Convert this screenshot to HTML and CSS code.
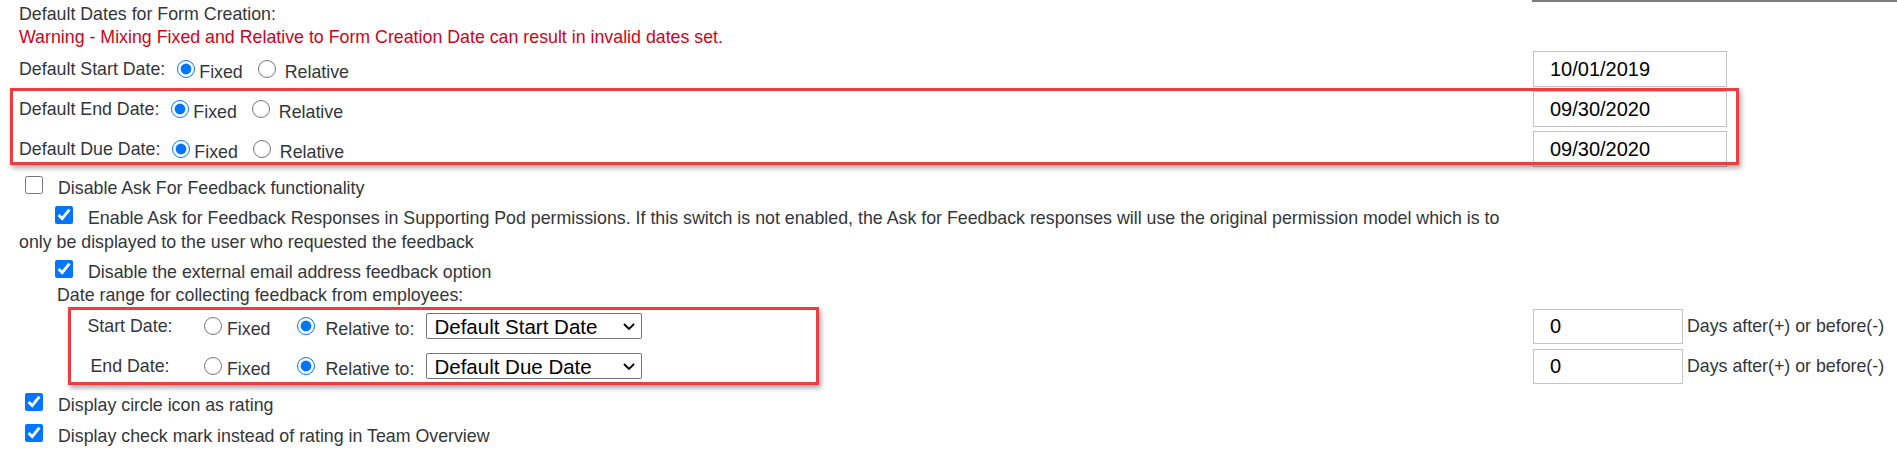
FILE: index.html
```
<!DOCTYPE html>
<html>
<head>
    <title>Form Template Settings</title>
    <link rel="stylesheet" href="styles.css">
</head>
<body>
    <div class="page">
        <div class="prev-field"></div>
        <div class="heading">Default Dates for Form Creation:</div>
        <div class="warning">Warning - Mixing Fixed and Relative to Form Creation Date can result in invalid dates set.</div>

        <div class="date-row">
            <div class="row-left">
                <span class="lbl">Default Start Date:</span>
                <input type="radio" name="startType" class="radio radio-fixed" checked>
                <span class="opt-text">Fixed</span>
                <input type="radio" name="startType" class="radio radio-rel">
                <span class="opt-text rel">Relative</span>
            </div>
            <div class="row-right"><input type="text" class="date-input" value="10/01/2019"></div>
        </div>

        <!-- end + due dates are marked in the screenshot -->
        <div class="highlight highlight-dates">
            <div class="date-row">
                <div class="row-left">
                    <span class="lbl">Default End Date:</span>
                    <input type="radio" name="endType" class="radio radio-fixed" checked>
                    <span class="opt-text">Fixed</span>
                    <input type="radio" name="endType" class="radio radio-rel">
                    <span class="opt-text rel">Relative</span>
                </div>
                <div class="row-right"><input type="text" class="date-input" value="09/30/2020"></div>
            </div>
            <div class="date-row">
                <div class="row-left">
                    <span class="lbl">Default Due Date:</span>
                    <input type="radio" name="dueType" class="radio radio-fixed" checked>
                    <span class="opt-text">Fixed</span>
                    <input type="radio" name="dueType" class="radio radio-rel">
                    <span class="opt-text rel">Relative</span>
                </div>
                <div class="row-right"><input type="text" class="date-input" value="09/30/2020"></div>
            </div>
        </div>

        <div class="check-line first"><input type="checkbox" class="check">Disable Ask For Feedback functionality</div>
        <div class="check-line nested enable"><input type="checkbox" class="check" checked>Enable Ask for Feedback Responses in Supporting Pod permissions. If this switch is not enabled, the Ask for Feedback responses will use the original permission model which is to only be displayed to the user who requested the feedback</div>
        <div class="check-line nested external"><input type="checkbox" class="check" checked>Disable the external email address feedback option</div>
        <div class="range-title">Date range for collecting feedback from employees:</div>

        <div class="highlight highlight-range">
            <div class="range-row">
                <div class="row-left">
                    <span class="range-lbl">Start Date:</span>
                    <input type="radio" name="fbStart" class="radio radio-fixed">
                    <span class="opt-text">Fixed</span>
                    <input type="radio" name="fbStart" class="radio radio-rel" checked>
                    <span class="opt-text rel">Relative to:</span>
                    <span class="select-wrap">
                        <select class="date-select">
                            <option>Default Start Date</option>
                            <option>Default End Date</option>
                            <option>Default Due Date</option>
                        </select>
                        <svg class="chevron" width="12" height="7" viewBox="0 0 12 7"><path d="M1 1 L6 6 L11 1" fill="none" stroke="#000" stroke-width="1.8"/></svg>
                    </span>
                </div>
                <div class="row-right">
                    <input type="text" class="days-input" value="0">
                    <span class="days-text">Days after(+) or before(-)</span>
                </div>
            </div>
            <div class="range-row">
                <div class="row-left">
                    <span class="range-lbl">End Date:</span>
                    <input type="radio" name="fbEnd" class="radio radio-fixed">
                    <span class="opt-text">Fixed</span>
                    <input type="radio" name="fbEnd" class="radio radio-rel" checked>
                    <span class="opt-text rel">Relative to:</span>
                    <span class="select-wrap">
                        <select class="date-select">
                            <option>Default Start Date</option>
                            <option>Default End Date</option>
                            <option selected>Default Due Date</option>
                        </select>
                        <svg class="chevron" width="12" height="7" viewBox="0 0 12 7"><path d="M1 1 L6 6 L11 1" fill="none" stroke="#000" stroke-width="1.8"/></svg>
                    </span>
                </div>
                <div class="row-right">
                    <input type="text" class="days-input" value="0">
                    <span class="days-text">Days after(+) or before(-)</span>
                </div>
            </div>
        </div>

        <div class="check-line circle"><input type="checkbox" class="check" checked>Display circle icon as rating</div>
        <div class="check-line checkmark"><input type="checkbox" class="check" checked>Display check mark instead of rating in Team Overview</div>
    </div>
</body>
</html>
```
FILE: styles.css
```
body { margin: 0; background: #fff; font-family: "Liberation Sans", Arial, sans-serif; font-size: 17.8px; color: #32363a; }
.page { padding-left: 19px; overflow: hidden; }

/* bottom edge of the field above, cut off by the screenshot */
.prev-field { height: 0; margin-left: 1513px; border-bottom: 2px solid #7d7d7d; }

.heading { line-height: 23px; margin-top: 1px; }
.warning { line-height: 23px; color: #d0021b; }

.date-row, .range-row { display: flex; height: 40px; align-items: center; }
.row-left { width: 1514px; flex: none; display: flex; align-items: center; }
.row-right { display: flex; align-items: center; }

.radio { width: 18px; height: 18px; margin: 0; flex: none; }
.opt-text { margin-top: 6px; margin-left: 4px; }
.date-row .radio-fixed { margin-left: 12px; }
.date-row .radio-rel { margin-left: 15px; }
.date-row .opt-text.rel { margin-left: 9px; }

.date-input { box-sizing: border-box; width: 194px; height: 36px; border: 1px solid #c4c4c4; padding: 0 0 0 16px; font-family: "Liberation Sans", Arial, sans-serif; font-size: 20px; color: #000; outline: none; }

.highlight { position: relative; }
.highlight::after { content: ''; position: absolute; border: 3px solid #ef3b42; box-shadow: 2px 3px 5px rgba(0, 0, 0, 0.35); pointer-events: none; }
.highlight-dates::after { top: -1px; left: -9px; width: 1723px; height: 71px; }
.highlight-range::after { top: 1px; left: 49px; width: 745px; height: 72px; }

.check-line { width: 1510px; line-height: 24px; }
.check { width: 18px; height: 18px; margin: 3px 15px 3px 6px; }
.check-line.first { margin-top: 4px; }
.check-line.nested { text-indent: 30px; }
.check-line.enable { margin-top: 2.5px; }
.check-line.external { margin-top: 3.5px; }
.check-line.circle { margin-top: 3.5px; }
.check-line.checkmark { margin-top: 4.5px; }

.range-title { line-height: 18px; margin-top: 2px; padding-left: 38px; }
.highlight-range { margin-top: 2px; }

.range-row .row-left { padding-left: 61px; box-sizing: border-box; }
.range-lbl { width: 100px; text-align: center; flex: none; }
.range-row .radio-fixed { margin-left: 24px; }
.range-row .opt-text { margin-left: 5px; }
.range-row .radio-rel { margin-left: 27px; }
.range-row .opt-text.rel { margin-left: 10px; }

.select-wrap { position: relative; margin-left: 12px; display: flex; }
.date-select { appearance: none; -webkit-appearance: none; box-sizing: border-box; width: 216px; height: 26px; border: 1px solid #767676; border-radius: 2px; background: #fff; padding: 0 0 0 7px; font-family: "Liberation Sans", Arial, sans-serif; font-size: 20.5px; color: #000; outline: none; }
.chevron { position: absolute; right: 7px; top: 10px; pointer-events: none; }

.days-input { box-sizing: border-box; width: 150px; height: 35px; border: 1px solid #c4c4c4; padding: 0 0 0 16px; font-family: "Liberation Sans", Arial, sans-serif; font-size: 20px; color: #000; outline: none; }
.days-text { margin-left: 4px; }
```
